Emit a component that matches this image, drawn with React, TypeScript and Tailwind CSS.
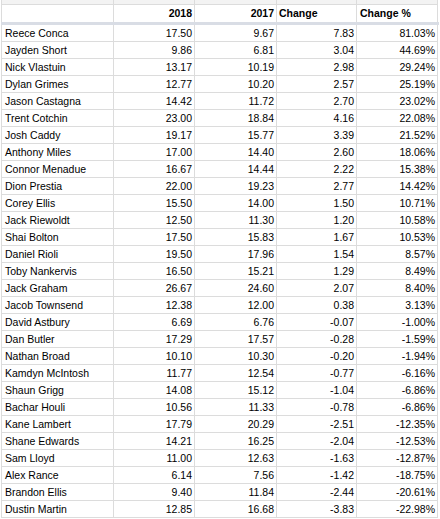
import React from 'react';

type Row = [string, string, string, string, string];

const rows: Row[] = [
    ['Reece Conca', '17.50', '9.67', '7.83', '81.03%'],
    ['Jayden Short', '9.86', '6.81', '3.04', '44.69%'],
    ['Nick Vlastuin', '13.17', '10.19', '2.98', '29.24%'],
    ['Dylan Grimes', '12.77', '10.20', '2.57', '25.19%'],
    ['Jason Castagna', '14.42', '11.72', '2.70', '23.02%'],
    ['Trent Cotchin', '23.00', '18.84', '4.16', '22.08%'],
    ['Josh Caddy', '19.17', '15.77', '3.39', '21.52%'],
    ['Anthony Miles', '17.00', '14.40', '2.60', '18.06%'],
    ['Connor Menadue', '16.67', '14.44', '2.22', '15.38%'],
    ['Dion Prestia', '22.00', '19.23', '2.77', '14.42%'],
    ['Corey Ellis', '15.50', '14.00', '1.50', '10.71%'],
    ['Jack Riewoldt', '12.50', '11.30', '1.20', '10.58%'],
    ['Shai Bolton', '17.50', '15.83', '1.67', '10.53%'],
    ['Daniel Rioli', '19.50', '17.96', '1.54', '8.57%'],
    ['Toby Nankervis', '16.50', '15.21', '1.29', '8.49%'],
    ['Jack Graham', '26.67', '24.60', '2.07', '8.40%'],
    ['Jacob Townsend', '12.38', '12.00', '0.38', '3.13%'],
    ['David Astbury', '6.69', '6.76', '-0.07', '-1.00%'],
    ['Dan Butler', '17.29', '17.57', '-0.28', '-1.59%'],
    ['Nathan Broad', '10.10', '10.30', '-0.20', '-1.94%'],
    ['Kamdyn McIntosh', '11.77', '12.54', '-0.77', '-6.16%'],
    ['Shaun Grigg', '14.08', '15.12', '-1.04', '-6.86%'],
    ['Bachar Houli', '10.56', '11.33', '-0.78', '-6.86%'],
    ['Kane Lambert', '17.79', '20.29', '-2.51', '-12.35%'],
    ['Shane Edwards', '14.21', '16.25', '-2.04', '-12.53%'],
    ['Sam Lloyd', '11.00', '12.63', '-1.63', '-12.87%'],
    ['Alex Rance', '6.14', '7.56', '-1.42', '-18.75%'],
    ['Brandon Ellis', '9.40', '11.84', '-2.44', '-20.61%'],
    ['Dustin Martin', '12.85', '16.68', '-3.83', '-22.98%'],
];

// column widths include the 1px right gridline
const grid = 'grid grid-cols-[112px_81px_82px_80px_81px]';
const cell = 'border-r border-[#dcdcdc] truncate';

export default function App() {
    return (
        <div
            className="w-[440px] h-[519px] overflow-hidden bg-white text-black text-[10.5px]"
            style={{ fontFamily: '"Liberation Sans", Arial, sans-serif' }}
        >
            <div className="ml-[1px] w-[437px] border-l border-[#dcdcdc]">
                {/* sliver of the row above */}
                <div className={`${grid} h-[5px] bg-[#f3f3f3] border-b border-[#dcdcdc]`}>
                    <div className={cell} />
                    <div className={cell} />
                    <div className={cell} />
                    <div className={cell} />
                    <div className={cell} />
                </div>

                {/* header row */}
                <div className={`${grid} h-[17px] leading-[17px] font-bold`}>
                    <div className={cell} />
                    <div className={`${cell} text-right pr-[2px]`}>2018</div>
                    <div className={`${cell} text-right pr-[2px]`}>2017</div>
                    <div className={`${cell} pl-[2px]`}>Change</div>
                    <div className={`${cell} pl-[3px]`}>Change %</div>
                </div>

                {/* freeze bar */}
                <div className="h-[3px] bg-[#d9dde5] -ml-[1px] w-[438px]" />

                {rows.map((r) => (
                    <div key={r[0]} className={`${grid} h-[17px] leading-[16px] border-b border-[#dcdcdc]`}>
                        <div className={`${cell} pl-[3px]`}>{r[0]}</div>
                        <div className={`${cell} text-right pr-[2px]`}>{r[1]}</div>
                        <div className={`${cell} text-right pr-[2px]`}>{r[2]}</div>
                        <div className={`${cell} text-right pr-[2px]`}>{r[3]}</div>
                        <div className={`${cell} text-right pr-[2px]`}>{r[4]}</div>
                    </div>
                ))}
            </div>
        </div>
    );
}
